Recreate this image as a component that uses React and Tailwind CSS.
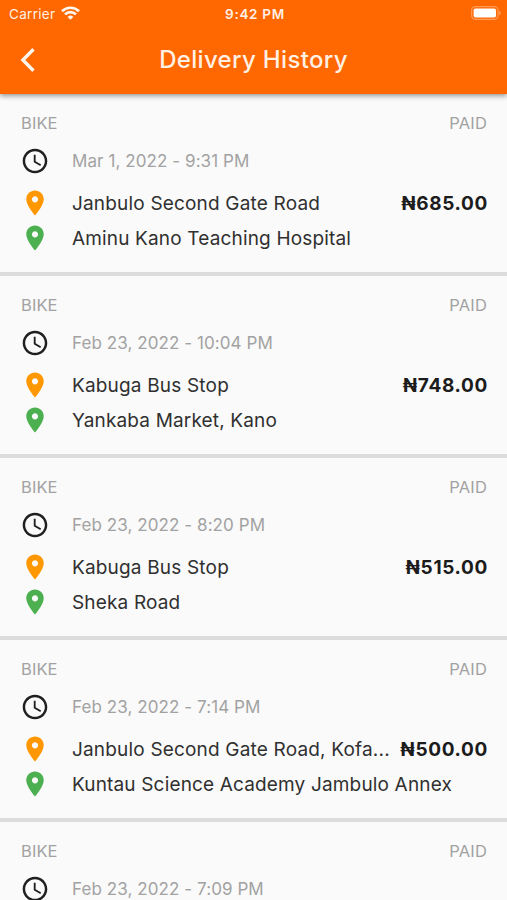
const deliveries = [
  { date: "Mar 1, 2022 - 9:31 PM", from: "Janbulo Second Gate Road", to: "Aminu Kano Teaching Hospital", price: "₦685.00" },
  { date: "Feb 23, 2022 - 10:04 PM", from: "Kabuga Bus Stop", to: "Yankaba Market, Kano", price: "₦748.00" },
  { date: "Feb 23, 2022 - 8:20 PM", from: "Kabuga Bus Stop", to: "Sheka Road", price: "₦515.00" },
  { date: "Feb 23, 2022 - 7:14 PM", from: "Janbulo Second Gate Road, Kofa...", to: "Kuntau Science Academy Jambulo Annex", price: "₦500.00" },
  { date: "Feb 23, 2022 - 7:09 PM", from: "", to: "", price: "" },
];

function Clock() {
  return (
    <svg className="size-[30px] shrink-0" viewBox="-0.2 -0.2 24.4 24.4" fill="#1f1f1f">
      <path d="M11.99 2C6.47 2 2 6.48 2 12s4.47 10 9.99 10C17.52 22 22 17.52 22 12S17.52 2 11.99 2zM12 20c-4.42 0-8-3.58-8-8s3.58-8 8-8 8 3.58 8 8-3.58 8-8 8zm.5-13H11v6l5.25 3.15.75-1.23-4.5-2.67z" />
    </svg>
  );
}

function Pin({ className }) {
  return (
    <svg className={"mb-px size-[30px] shrink-0 " + className} viewBox="0 0 24 24" fill="currentColor">
      <path d="M12 2C8.13 2 5 5.13 5 9c0 5.25 7 13 7 13s7-7.75 7-13c0-3.87-3.13-7-7-7zm0 9.5c-1.38 0-2.5-1.12-2.5-2.5s1.12-2.5 2.5-2.5 2.5 1.12 2.5 2.5-1.12 2.5-2.5 2.5z" />
    </svg>
  );
}

function Delivery({ item }) {
  return (
    <li className="h-[182px] shrink-0 border-b-4 border-[#dcdcdc] pt-[18px] pr-5 pl-5">
      <div className="flex h-[22px] items-center justify-between pl-px text-[16.5px] tracking-[0.1px] text-[#a2a2a2]">
        <span>BIKE</span>
        <span className="tracking-[0.2px]">PAID</span>
      </div>
      <div className="mt-[11px] flex h-8 items-center gap-[22px] text-[17px] text-[#a2a2a2]">
        <Clock />
        <span className="pt-px tracking-[0.08px]">{item.date}</span>
      </div>
      {item.from && (
        <div className="mt-2 text-[19px] text-[#303030]">
          <div className="flex h-9 items-center">
            <Pin className="mb-[2px] text-[#ff9800]" />
            <span className="ml-[22px] flex-1 pt-[2px] tracking-[0.18px] whitespace-nowrap">{item.from}</span>
            <span className="-mr-px pt-[2px] font-bold tracking-[0.66px] text-[#1c1c1c]">{item.price}</span>
          </div>
          <div className="flex h-[35px] items-center">
            <Pin className="text-[#4caf50]" />
            <span className="ml-[22px] pt-[2px] tracking-[0.16px]">{item.to}</span>
          </div>
        </div>
      )}
    </li>
  );
}

function StatusBar() {
  return (
    <div className="grid h-7 grid-cols-3 items-center pr-[6px] pl-[9px] text-[13.5px] text-[#fff0e4]">
      <div className="flex items-center gap-[6px]">
        <span className="tracking-[0.3px]">Carrier</span>
        <svg className="mb-[2px] h-[14px] w-[19px]" viewBox="0 0 19 14" fill="none" stroke="#fff8f0" strokeWidth="2.7">
          <path d="M1 5.2a12.2 12.2 0 0 1 17 0" />
          <path d="M4 8.4a7.9 7.9 0 0 1 11 0" />
          <path d="M9.5 13.8 6.6 10.9a4.1 4.1 0 0 1 5.8 0Z" fill="#fff8f0" stroke="none" />
        </svg>
      </div>
      <span className="text-center font-semibold tracking-[0.7px] whitespace-nowrap">9:42 PM</span>
      <svg className="mb-[2px] h-[14px] w-[30px] justify-self-end" viewBox="0 0 30 14">
        <rect x="0.6" y="0.6" width="26.4" height="12.8" rx="3.8" fill="none" stroke="#ff9a55" strokeWidth="1.2" />
        <rect x="2.6" y="2.5" width="22.4" height="9" rx="1.8" fill="#fff" />
        <path d="M28 4.8q1.8 .7 1.8 2.2t-1.8 2.2z" fill="#ff9a55" />
      </svg>
    </div>
  );
}

export default function App() {
  return (
    <div className="flex h-[900px] w-full flex-col overflow-hidden bg-[#fafafa] font-['Inter','Liberation_Sans',sans-serif]">
      <header className="relative h-[94px] shrink-0 bg-[#ff6700] shadow-[0_2px_5px_rgba(0,0,0,0.4)]">
        <StatusBar />
        <div className="grid h-16 grid-cols-[60px_1fr_60px] items-center">
          <svg className="ml-5 h-6 w-4" viewBox="0 0 16 24" fill="none" stroke="#fff4e9" strokeWidth="3.4">
            <path d="M13.5 1.2 2.9 12l10.6 10.8" />
          </svg>
          <h1 className="text-center text-[24px] font-medium tracking-[0.32px] whitespace-nowrap text-[#fff0e4]">Delivery History</h1>
        </div>
      </header>
      <ul className="flex flex-col">
        {deliveries.map((item) => (
          <Delivery key={item.date} item={item} />
        ))}
      </ul>
    </div>
  );
}
